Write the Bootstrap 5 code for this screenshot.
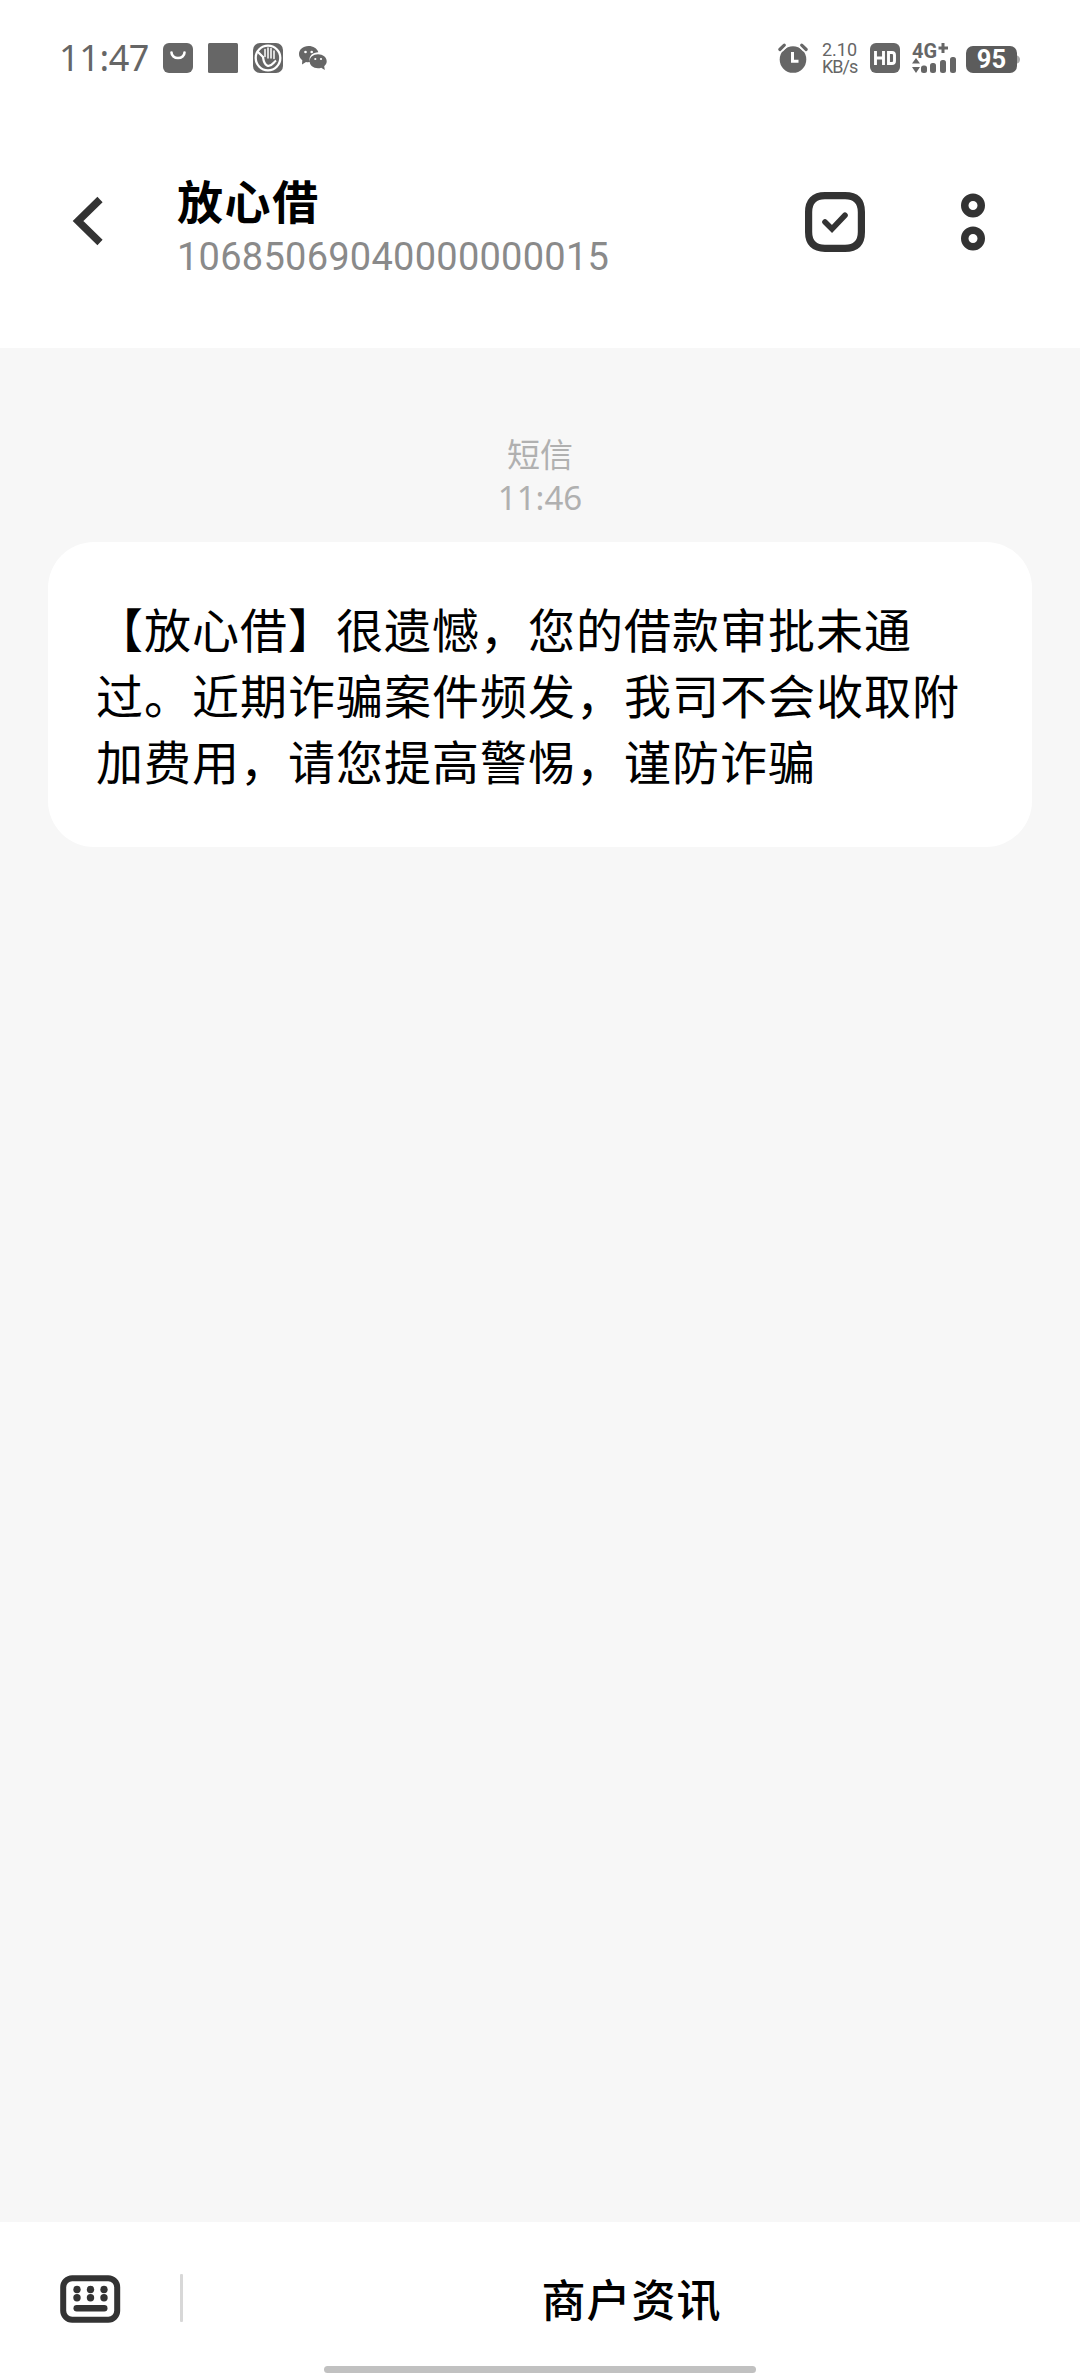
<!DOCTYPE html>
<html lang="zh-CN">
<head>
<meta charset="utf-8">
<meta name="viewport" content="width=device-width, initial-scale=1">
<title>放心借</title>
<link href="https://cdn.jsdelivr.net/npm/bootstrap@5.3.0/dist/css/bootstrap.min.css" rel="stylesheet">
<style>
body{font-family:"Noto Sans CJK SC",sans-serif;color:#000;background:#f7f7f7;height:2376px;overflow:hidden}
svg{display:block;flex:none;overflow:visible}
.status-bar{height:116px;padding:0 60px 0 59px;color:#666}
.clock{font:400 36px/36px "Noto Sans",sans-serif;width:104px;letter-spacing:-.4px}
.status-icons{gap:15px}
.rate{font:400 18px/17px Roboto,sans-serif;width:49px;padding-left:1px}
.rate-unit{letter-spacing:-1px}
.top-bar{height:232px;padding:55px 95px 0 73px}
.sender{margin-left:74px}
.sender-name{font-size:46px;line-height:56px;font-weight:700;letter-spacing:1.6px}
.sender-no{font:400 38px/44px Roboto,sans-serif;letter-spacing:.25px;color:#8a8a8a;margin-top:8px}
.back-icon{margin-top:26px}
.check-icon{margin-top:21px}
.more-icon{margin:22px 0 0 96px}
.thread{padding:83px 48px 0}
.stamp{color:#b0b0b0;font-size:33px;line-height:44px;height:111px}
.stamp-time{font:400 33px/46px "Noto Sans",sans-serif}
.bubble{border-radius:46px;height:305px;padding:53px 48px 0;font-size:47px;letter-spacing:1px;line-height:66px}
.bottom-bar{height:144px;padding:51px 0 0 60px}
.keyboard-icon{margin-top:2px}
.divider{width:3px;height:48px;background:#d8d8d8;margin:1px 0 0 60px;border-radius:1px}
.menu-item{font-size:44px;letter-spacing:1px;font-weight:500;line-height:50px}
.home-bar{width:432px;height:7px;background:#c1c1c1;margin-bottom:3px}
</style>
<script src="https://cdn.jsdelivr.net/npm/bootstrap@5.3.0/dist/js/bootstrap.bundle.min.js"></script>
</head>
<body class="d-flex flex-column">
<header class="bg-white">
  <div class="status-bar d-flex align-items-center justify-content-between">
    <div class="d-flex align-items-center">
      <span class="clock">11:47</span>
      <div class="status-icons d-flex align-items-center">
        <svg width="30" height="30" viewBox="0 0 30 30"><rect width="30" height="30" rx="6" fill="#666"/><path d="M8.500 9.500a6.500 5.500 0 0 0 13 0" fill="none" stroke="#fff" stroke-width="2.600" stroke-linecap="round"/></svg>
        <svg width="30" height="30"><rect width="30" height="30" rx="1.500" fill="#666"/></svg>
        <svg width="30" height="30" viewBox="0 0 30 30"><rect width="30" height="30" rx="7" fill="#666"/><circle cx="15" cy="15" r="12.300" fill="none" stroke="#fff" stroke-width="2.300"/><path d="M4.500 8.500L10 14C10.500 18 11 21 14 22.500C18 24.500 20 20 23 17.500" fill="none" stroke="#fff" stroke-width="2.200"/><path d="M12 6.500v7M15 5v10M18 5.500v9.500M21 8v7.500" stroke="#fff" stroke-width="1.500" stroke-linecap="round"/></svg>
        <svg width="30" height="30" viewBox="0 0 30 30"><path d="M10.500 3C4.800 3 1 6.700 1 11c0 2.700 1.400 4.800 3.300 6.200L4 21.500l4-2.500c1.500.3 2.500.3 4 .1-2-6.500 3-9.900 8.300-9.900C19.200 5.500 15.200 3 10.500 3z" fill="#666"/><path d="M20 11.300c-4.800 0-8.400 3.100-8.400 7s3.600 7 8.400 7c1.200 0 2.200-.1 3.200-.5l3.600 2.200-.6-3.800c1.600-1.300 2.500-3 2.500-4.900 0-3.900-3.700-7-8.700-7z" fill="#666"/><g fill="#fff"><circle cx="7.500" cy="9" r="1.300"/><circle cx="13.700" cy="9" r="1.300"/><circle cx="17.300" cy="16" r="1.100"/><circle cx="23" cy="16" r="1.100"/></g></svg>
      </div>
    </div>
    <div class="d-flex align-items-center">
      <svg width="42" height="30" viewBox="0 0 42 30"><circle cx="14" cy="16.500" r="13.300" fill="#666"/><path d="M1.500 6.500L6 2.200M26.500 6.500L22 2.200" stroke="#fff" stroke-width="6"/><path d="M.8 6.500L5.300 2.200M27.200 6.500L22.700 2.200" stroke="#666" stroke-width="3.200" stroke-linecap="round"/><path d="M13.500 9v9.200h6" fill="none" stroke="#fff" stroke-width="3"/></svg>
      <div class="rate"><div>2.10</div><div class="rate-unit">KB/s</div></div>
      <svg width="42" height="30" viewBox="0 0 42 30"><rect width="30" height="30" rx="6" fill="#666"/><path d="M5.500 8v14M13.500 8v14M5.500 15h8M18.500 9.500h3.500q2.500 0 2.500 2.500v6q0 2.500-2.500 2.500h-3.500z" fill="none" stroke="#fff" stroke-width="2.900"/></svg>
      <svg width="54" height="30" viewBox="0 0 54 30"><g fill="#666"><text x="0" y="14.500" font-family="Roboto,sans-serif" font-weight="700" font-size="20" textLength="25" lengthAdjust="spacingAndGlyphs">4G</text><path d="M26.500 3.500h3V0h3v3.500H36v3h-3.500V10h-3V6.500h-3z"/><path d="M0 20.500L4 15l4 5.500zM0 24h8l-4 6z"/><rect x="9" y="22.500" width="6" height="7.500" rx="2.500"/><rect x="18" y="20" width="6" height="10" rx="2.500"/><rect x="28" y="17" width="6" height="13" rx="2.500"/><rect x="38" y="14" width="6" height="16" rx="2.500"/></g></svg>
      <svg width="54" height="30" viewBox="0 0 54 30"><path d="M50 12q4 1 4 4.500t-4 4.500z" fill="#aaa"/><rect y="3" width="51" height="27" rx="7" fill="#5c5c5c"/><text x="25.500" y="25.300" text-anchor="middle" font-family="Roboto,sans-serif" font-weight="700" font-size="25.500" fill="#fff">95</text></svg>
    </div>
  </div>
  <nav class="top-bar d-flex align-items-start">
    <svg class="back-icon" width="30" height="48" viewBox="0 0 30 48"><path d="M27 2.500L5 24l22 21.500" fill="none" stroke="#333" stroke-width="7.400"/></svg>
    <div class="sender flex-grow-1">
      <div class="sender-name">放心借</div>
      <div class="sender-no">10685069040000000015</div>
    </div>
    <svg class="check-icon" width="60" height="60" viewBox="0 0 60 60" fill="none" stroke="#333"><path d="M20 3.600h20q16.400 0 16.400 16.400v20q0 16.400-16.400 16.400H20Q3.600 56.400 3.600 40V20Q3.600 3.600 20 3.600z" stroke-width="7.200"/><path d="M20 30l7 7L40 23.300" stroke-width="5.600" stroke-linecap="round"/></svg>
    <svg class="more-icon" width="24" height="58" viewBox="0 0 24 58" fill="none" stroke="#333" stroke-width="7.500"><circle cx="12" cy="12.500" r="8.250"/><circle cx="12" cy="45.500" r="8.250"/></svg>
  </nav>
</header>
<main class="thread flex-grow-1">
  <div class="stamp text-center"><div>短信</div><div class="stamp-time">11:46</div></div>
  <div class="bubble bg-white text-nowrap">【放心借】很遗憾，您的借款审批未通<br>过。近期诈骗案件频发，我司不会收取附<br>加费用，请您提高警惕，谨防诈骗</div>
</main>
<footer class="bg-white d-flex flex-column">
  <div class="bottom-bar d-flex align-items-start">
    <svg class="keyboard-icon" width="60" height="48" viewBox="0 0 60 48" fill="#333"><rect x="3.200" y="3.200" width="54" height="41.600" rx="9" fill="none" stroke="#333" stroke-width="6"/><circle cx="17" cy="14.500" r="3.700"/><circle cx="30.500" cy="14.500" r="3.700"/><circle cx="44" cy="14.500" r="3.700"/><circle cx="17" cy="22.700" r="3.700"/><circle cx="30.500" cy="22.700" r="3.700"/><circle cx="44" cy="22.700" r="3.700"/><rect x="13.500" y="30" width="34" height="6.500" rx="3.200"/></svg>
    <div class="divider"></div>
    <div class="menu-item flex-grow-1 text-center">商户资讯</div>
  </div>
  <div class="home-bar rounded-pill mx-auto"></div>
</footer>
</body>
</html>
